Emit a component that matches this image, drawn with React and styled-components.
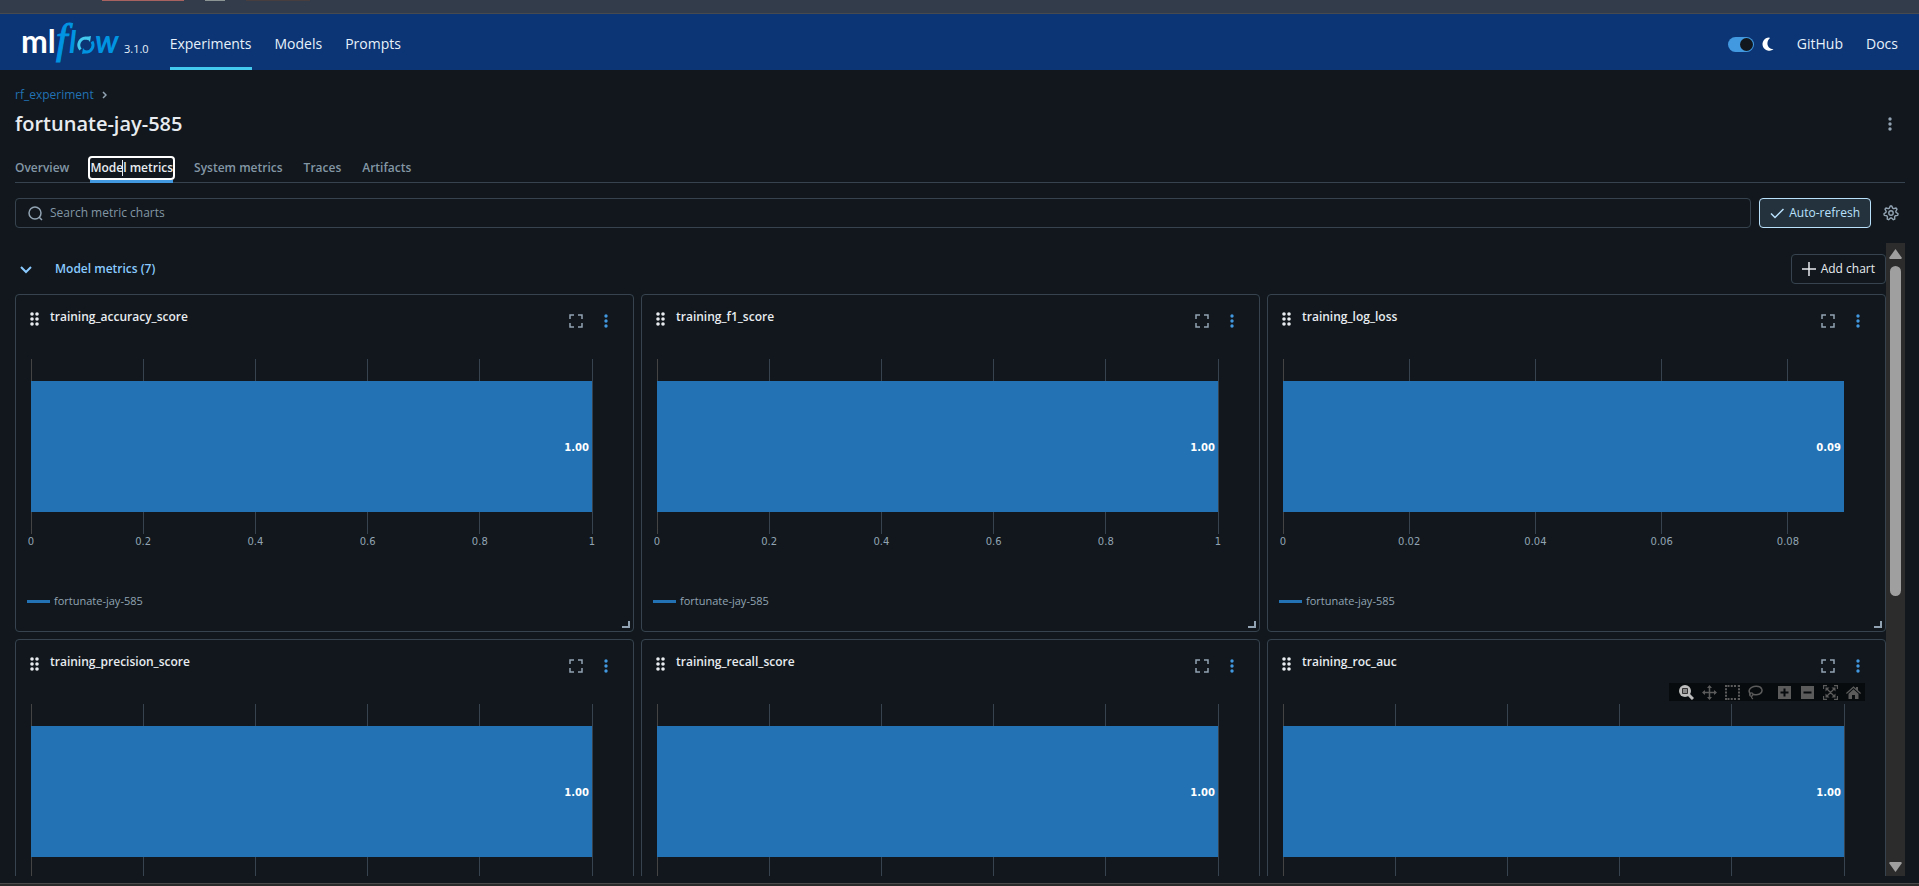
import React from "react";
import styled, { createGlobalStyle } from "styled-components";

const GlobalStyle = createGlobalStyle`
  * { box-sizing: border-box; }
  body {
    margin: 0;
    background: #11171c;
    color: #e8ecf0;
    font-family: "Open Sans", "Noto Sans", sans-serif;
    font-size: 12px;
    line-height: 20px;
  }
  button, input { font: inherit; color: inherit; }
  a { text-decoration: none; color: inherit; }
  h1, h2, h3 { margin: 0; }
`;

const Page = styled.div`
  display: flex;
  flex-direction: column;
  height: 100vh;
`;

const BrowserEdge = styled.div`
  flex: none;
  display: flex;
  align-items: flex-start;
  height: 14px;
  padding-left: 102px;
  background: #323c4b;
  border-bottom: 1px solid #474b50;
`;

const EdgeMark = styled.i`
  width: ${(p) => p.$width}px;
  height: 1px;
  margin-right: 21px;
  background: ${(p) => p.$color};
`;

const Header = styled.header`
  flex: none;
  display: flex;
  align-items: center;
  height: 56px;
  padding: 0 21px;
  background: #0b3574;
`;

const Brand = styled.a`
  display: flex;
  align-items: flex-end;
  gap: 5px;
  margin-right: 21px;
  color: #e7f1fb;
  line-height: 16px;
`;

const Version = styled.span`
  padding-bottom: 5px;
  font-size: 11px;
`;

const Nav = styled.nav`
  display: flex;
  align-self: stretch;
  gap: 23px;
`;

const NavLink = styled.a`
  display: flex;
  align-items: center;
  padding-top: 7px;
  border-bottom: 3px solid ${(p) => (p.$active ? "#43c9ed" : "transparent")};
  color: #e7f1fb;
  font-size: 14px;
`;

const HeaderEnd = styled.div`
  display: flex;
  align-self: stretch;
  align-items: center;
  gap: 23px;
  margin-left: auto;
`;

const ThemeSwitch = styled.label`
  display: flex;
  align-items: center;
  gap: 8px;
  padding-top: 4px;
`;

const SwitchInput = styled.input`
  appearance: none;
  display: flex;
  justify-content: flex-end;
  width: 26px;
  height: 15px;
  margin: 0;
  padding: 1px;
  border-radius: 8px;
  background: #4299e0;
  &::after {
    content: "";
    width: 13px;
    height: 13px;
    border-radius: 50%;
    background: #11171c;
  }
`;

const Main = styled.main`
  flex: 1;
  min-height: 0;
  display: flex;
  flex-direction: column;
  padding: 15px 14px 7px 15px;
`;

const Breadcrumb = styled.nav`
  display: flex;
  align-items: center;
  gap: 8px;
  color: #2272b4;
`;

const TitleRow = styled.div`
  display: flex;
  align-items: center;
  justify-content: space-between;
  height: 38px;
`;

const Title = styled.h1`
  font-size: 20px;
  font-weight: 600;
  line-height: 28px;
`;

const IconButton = styled.button`
  display: grid;
  place-items: center;
  width: 30px;
  height: 30px;
  padding: 0;
  border: 0;
  background: none;
  color: ${(p) => p.$color || "#92a4b3"};
`;

const Tabs = styled.div`
  display: flex;
  gap: 21px;
  margin-top: 14px;
  border-bottom: 1px solid #37444f;
`;

const Tab = styled.button`
  height: 26px;
  margin-bottom: -1px;
  padding: 1px 0 2px;
  border: 0;
  border-bottom: 3px solid ${(p) => (p.$active ? "#4299e0" : "transparent")};
  background: none;
  color: ${(p) => (p.$active ? "#e8ecf0" : "#8396a5")};
  font-weight: 600;
  white-space: nowrap;
`;

const FocusRing = styled.span`
  position: relative;
  display: block;
  border-radius: 2px;
  outline: 2px solid #fff;
  line-height: 20px;
`;

const TextCursor = styled.i`
  position: absolute;
  top: 2px;
  left: 32px;
  width: 1px;
  height: 16px;
  background: #e8ecf0;
`;

const Toolbar = styled.div`
  display: flex;
  gap: 8px;
  margin-top: 15px;
`;

const SearchBox = styled.label`
  flex: 1;
  display: flex;
  align-items: center;
  gap: 7px;
  height: 30px;
  padding: 0 12px;
  border: 1px solid #37444f;
  border-radius: 4px;
  color: #92a4b3;
`;

const SearchInput = styled.input`
  flex: 1;
  padding: 0;
  border: 0;
  outline: 0;
  background: none;
  &::placeholder { color: #8396a5; opacity: 1; }
`;

const Button = styled.button`
  display: flex;
  align-items: center;
  gap: 5px;
  height: 30px;
  padding: 0 10px;
  border: 1px solid ${(p) => (p.$on ? "#bae1fc" : "#37444f")};
  border-radius: 4px;
  background: ${(p) => (p.$on ? "#24323d" : "none")};
  color: ${(p) => (p.$on ? "#bae1fc" : "#e8ecf0")};
  white-space: nowrap;
`;

const Settings = styled.div`
  display: flex;
  margin: 0 -1px 0 -3px;
`;

const ScrollRow = styled.div`
  flex: 1;
  min-height: 0;
  display: flex;
  margin-top: 15px;
`;

const ScrollArea = styled.div`
  flex: 1;
  overflow-y: auto;
  scrollbar-width: none;
`;

const ScrollBar = styled.div`
  display: flex;
  flex-direction: column;
  align-items: center;
  justify-content: space-between;
  width: 19px;
  padding: 6px 0 4px;
  background: #2c2c2c;
`;

const ScrollTrack = styled.div`
  flex: 1;
  margin: 7px 0;
`;

const ScrollThumb = styled.div`
  width: 11px;
  height: 56%;
  border-radius: 6px;
  background: #9f9f9f;
`;

const SectionHeader = styled.div`
  display: flex;
  align-items: center;
  padding: 11px 0 10px 1px;
`;

const SectionTitle = styled.h2`
  margin: 0 auto 0 19px;
  color: #8acaff;
  font-size: 12px;
  font-weight: 600;
`;

const Toggle = styled.button`
  display: flex;
  padding: 4px;
  border: 0;
  background: none;
  color: #8acaff;
`;

const Grid = styled.div`
  display: grid;
  grid-template-columns: repeat(3, 1fr);
  gap: 7px;
`;

const Card = styled.section`
  position: relative;
  height: 338px;
  border: 1px solid #37444f;
  border-radius: 4px;
`;

const CardHeader = styled.div`
  display: flex;
  align-items: flex-start;
  height: 64px;
  padding: 12px 12px 0 14px;
`;

const CardTitle = styled.h3`
  margin: 0 auto 0 11px;
  font-size: 12px;
  font-weight: 600;
`;

const CardActions = styled.div`
  display: flex;
  margin-top: -1px;
`;

const DragHandle = styled.span`
  padding-top: 5px;
  line-height: 0;
`;

const Plot = styled.svg`
  display: block;
  width: calc(100% - 56px);
  height: 192px;
  margin-left: 15px;
  overflow: visible;
  font-family: "DejaVu Sans", Verdana, sans-serif;
  font-size: 10px;
`;

const Legend = styled.div`
  display: flex;
  align-items: center;
  gap: 4px;
  margin: 40px 0 0 11px;
  color: #92a4b3;
  font-size: 11px;
`;

const LegendLine = styled.i`
  width: 23px;
  height: 3px;
  background: #2272b4;
`;

const ResizeCorner = styled.i`
  position: absolute;
  right: 3px;
  bottom: 3px;
  width: 8px;
  height: 7px;
  border: solid #92a4b3;
  border-width: 0 2px 2px 0;
`;

const ModeBar = styled.div`
  position: absolute;
  top: 43px;
  right: 20px;
  display: flex;
  align-items: center;
  height: 18px;
  padding-left: 6px;
  background: #070b0e;
`;

const ModeButton = styled.button`
  display: flex;
  margin-left: ${(p) => (p.$group ? 6 : 0)}px;
  padding: 0 4px;
  border: 0;
  background: none;
  color: ${(p) => (p.$active ? "#bdbdbd" : "#5b5b5b")};
`;

const LogoDrawing = styled.svg`
  overflow: visible;
`;

const Logo = () => (
  <LogoDrawing width="98" height="40" viewBox="0 0 98 40" role="img" aria-label="mlflow">
    <g fontFamily="Lato, sans-serif" fontWeight="700">
      <text x="0" y="31" fontSize="32" fill="#fff">ml</text>
      <g fontStyle="italic" fill="#0194e2">
        <text x="35" y="31" fontFamily="Liberation Serif, serif" fontWeight="400" fontSize="42" stroke="#0194e2" strokeWidth="1">f</text>
        <text x="48" y="31" fontSize="30">l</text>
        <text x="74" y="31" fontSize="32">w</text>
      </g>
    </g>
    <g fill="none" strokeWidth="3">
      <path d="M59.500 27.500a7 7 0 0 1 5-11.500q2 0 3.500 1" stroke="#43c9ed" />
      <path d="m65 15 5-1-1 6z" fill="#43c9ed" />
      <path d="M71 19.500a7 7 0 0 1-5 10.500q-2 0-3.500-1" stroke="#0194e2" />
      <path d="m66 31-5 1 1-6z" fill="#0194e2" />
    </g>
  </LogoDrawing>
);

const Kebab = () => (
  <svg width="4" height="14" viewBox="0 0 4 14" fill="currentColor" aria-hidden="true">
    <circle cx="2" cy="2" r="1.700" /><circle cx="2" cy="7" r="1.700" /><circle cx="2" cy="12" r="1.700" />
  </svg>
);

const Grip = () => (
  <svg width="9" height="14" viewBox="0 0 9 14" fill="#e8ecf0" aria-hidden="true">
    {[2, 7, 12].map((y) => (
      <g key={y}><circle cx="2" cy={y} r="1.800" /><circle cx="7" cy={y} r="1.800" /></g>
    ))}
  </svg>
);

const Stroke = ({ size = 14, d, width = 1.5, ...rest }) => (
  <svg width={size} height={size} viewBox={`0 0 ${size} ${size}`} fill="none" stroke="currentColor" strokeWidth={width} aria-hidden="true" {...rest}>
    <path d={d} />
  </svg>
);

const gearPoints = Array.from({ length: 28 }, (_, i) => {
  const angle = ((i - 0.5) / 28) * 2 * Math.PI - Math.PI / 2;
  const radius = i % 4 < 2 ? 7.1 : 5.1;
  return `${(8 + radius * Math.cos(angle)).toFixed(2)},${(8 + radius * Math.sin(angle)).toFixed(2)}`;
}).join(" ");

const Gear = () => (
  <svg width="16" height="16" viewBox="0 0 16 16" fill="none" stroke="currentColor" strokeWidth="1.400" strokeLinejoin="round" aria-hidden="true">
    <polygon points={gearPoints} />
    <circle cx="8" cy="8" r="2.200" />
  </svg>
);

const solid = (children) => (
  <svg width="15" height="15" viewBox="0 0 15 15" fill="currentColor" stroke="currentColor" strokeWidth="0" aria-hidden="true">{children}</svg>
);

const modes = [
  { name: "Zoom", active: true, icon: solid(<><path d="m9.500 9.500 4.500 4.500" strokeWidth="3" /><circle cx="6" cy="6" r="6" /><path d="M3.500 3.500h5v5h-5z" fill="#888" stroke="#333" strokeWidth="1" /></>) },
  { name: "Pan", icon: solid(<><path d="M7.500 1v13M1 7.500h13" strokeWidth="1.500" /><path d="M7.500 0 10 3H5zM7.500 15 5 12h5zM0 7.500 3 5v5zM15 7.500 12 10V5z" /></>) },
  { name: "Box Select", icon: solid(<path d="M1 0v15M14 0v15M2.500 1h10M2.500 14h10" fill="none" strokeWidth="2" strokeDasharray="2 1.250" />) },
  { name: "Lasso Select", icon: solid(<><path d="M3 9.500C-1 6 2 1.500 8 1.200s8 5.300 3.500 7.800c-3 1.500-5 .5-7 .3" fill="none" strokeWidth="1.500" /><circle cx="3.300" cy="9.500" r="1.700" fill="none" strokeWidth="1.200" /><path d="M3.500 11q-.5 2 1.500 3" fill="none" strokeWidth="1.200" /></>) },
  { name: "Zoom in", group: true, icon: solid(<><path d="M1 1h13v13H1z" /><path d="M7.500 3.500v8M3.500 7.500h8" stroke="#070b0e" strokeWidth="2" /></>) },
  { name: "Zoom out", icon: solid(<><path d="M1 1h13v13H1z" /><path d="M3.500 7.500h8" stroke="#070b0e" strokeWidth="2" /></>) },
  { name: "Autoscale", icon: solid(<><path d="M.5 4V.5H4M11 .5h3.500V4M14.500 11v3.500H11M4 14.500H.5V11M4 4l7 7M11 4l-7 7" fill="none" strokeWidth="1.300" /><path d="M2.500 2.500h4l-4 4zM12.500 2.500v4l-4-4zM12.500 12.500h-4l4-4zM2.500 12.500v-4l4 4z" /></>) },
  { name: "Reset axes", icon: solid(<><path d="M0 8 7.500 1.200 10 3.500V2h2v3.300L15 8l-.8 1L7.500 3 .8 9z" /><path d="m7.500 4.200 5 4.500V14H9v-4H6v4H2.500V8.700z" /></>) },
];

const unit = [[0, "0"], [20, "0.2"], [40, "0.4"], [60, "0.6"], [80, "0.8"], [100, "1"]];
const loss = [[0, "0"], [22.5, "0.02"], [45, "0.04"], [67.5, "0.06"], [90, "0.08"]];

const charts = [
  { title: "training_accuracy_score", value: "1.00", ticks: unit },
  { title: "training_f1_score", value: "1.00", ticks: unit },
  { title: "training_log_loss", value: "0.09", ticks: loss },
  { title: "training_precision_score", value: "1.00", ticks: unit },
  { title: "training_recall_score", value: "1.00", ticks: unit },
  { title: "training_roc_auc", value: "1.00", ticks: unit, hovered: true },
];

const ChartCard = ({ title, value, ticks, hovered }) => (
  <Card>
    <CardHeader>
      <DragHandle><Grip /></DragHandle>
      <CardTitle>{title}</CardTitle>
      <CardActions>
        <IconButton aria-label="Full screen">
          <Stroke d="M1 5V1h4M9 1h4v4M13 9v4H9M5 13H1V9" />
        </IconButton>
        <IconButton aria-label="Chart options" $color="#4299e0"><Kebab /></IconButton>
      </CardActions>
    </CardHeader>
    <Plot role="img" aria-label={`${title}: ${value}`}>
      {ticks.map(([at, label]) => (
        <g key={label}>
          <line x1={`${at}%`} x2={`${at}%`} y1="0" y2="175" stroke={at ? "#37444f" : "#444444"} shapeRendering="crispEdges" />
          <text x={`${at}%`} y="186" textAnchor="middle" fill="#92a4b3">{label}</text>
        </g>
      ))}
      <rect x="0" y="22" width="100%" height="131" fill="#2272b4" />
      <text x="100%" dx="-3" y="92" textAnchor="end" fill="#fff" fontWeight="700">{value}</text>
    </Plot>
    <Legend><LegendLine />fortunate-jay-585</Legend>
    <ResizeCorner />
    {hovered && (
      <ModeBar>
        {modes.map((m) => (
          <ModeButton key={m.name} aria-label={m.name} $active={m.active} $group={m.group}>{m.icon}</ModeButton>
        ))}
      </ModeBar>
    )}
  </Card>
);

const WindowEdge = styled.footer`
  flex: none;
  height: 3px;
  border-top: 1px solid #4b4b4b;
  background: #2a2a2a;
`;

export default function App() {
  return (
    <Page>
      <GlobalStyle />
      <BrowserEdge>
        <EdgeMark $width={82} $color="#a8625f" />
        <EdgeMark $width={20} $color="#8d9494" />
        <EdgeMark $width={64} $color="#473f3f" />
      </BrowserEdge>
      <Header>
        <Brand href="#"><Logo /><Version>3.1.0</Version></Brand>
        <Nav>
          <NavLink href="#" $active>Experiments</NavLink>
          <NavLink href="#">Models</NavLink>
          <NavLink href="#">Prompts</NavLink>
        </Nav>
        <HeaderEnd>
          <ThemeSwitch>
            <SwitchInput type="checkbox" role="switch" defaultChecked aria-label="Dark theme" />
            <svg width="12" height="14" viewBox="0 0 12 14" fill="#fff" aria-hidden="true">
              <path d="M7 .5A6.600 6.600 0 1 0 11.500 12C5 12 3.500 5 8 1Z" />
            </svg>
          </ThemeSwitch>
          <Nav>
            <NavLink href="#">GitHub</NavLink>
            <NavLink href="#">Docs</NavLink>
          </Nav>
        </HeaderEnd>
      </Header>
      <Main>
        <Breadcrumb>
          <a href="#">rf_experiment</a>
          <svg width="5" height="8" viewBox="0 0 5 8" fill="none" stroke="#92a4b3" strokeWidth="1.500" aria-hidden="true"><path d="m1 1 3 3-3 3" /></svg>
        </Breadcrumb>
        <TitleRow>
          <Title>fortunate-jay-585</Title>
          <IconButton aria-label="More"><Kebab /></IconButton>
        </TitleRow>
        <Tabs role="tablist">
          <Tab role="tab">Overview</Tab>
          <Tab role="tab" aria-selected="true" $active><FocusRing>Model metrics<TextCursor /></FocusRing></Tab>
          <Tab role="tab">System metrics</Tab>
          <Tab role="tab">Traces</Tab>
          <Tab role="tab">Artifacts</Tab>
        </Tabs>
        <Toolbar>
          <SearchBox>
            <svg width="15" height="15" viewBox="0 0 15 15" fill="none" stroke="currentColor" strokeWidth="1.500" aria-hidden="true"><circle cx="7" cy="7" r="6" /><path d="m11 11 3 3" /></svg>
            <SearchInput aria-label="Search metric charts" placeholder="Search metric charts" />
          </SearchBox>
          <Button $on aria-pressed="true"><Stroke d="m1 7.500 4 4 8.500-8.500" />Auto-refresh</Button>
          <Settings><IconButton aria-label="Configure charts"><Gear /></IconButton></Settings>
        </Toolbar>
        <ScrollRow>
          <ScrollArea>
            <SectionHeader>
              <Toggle aria-label="Collapse section"><Stroke size={12} width={2} d="m1 4 5 5 5-5" /></Toggle>
              <SectionTitle>Model metrics (7)</SectionTitle>
              <Button><Stroke d="M7 0v14M0 7h14" />Add chart</Button>
            </SectionHeader>
            <Grid>{charts.map((c) => <ChartCard key={c.title} {...c} />)}</Grid>
          </ScrollArea>
          <ScrollBar aria-hidden="true">
            <svg width="13" height="10" viewBox="0 0 13 10" fill="#9f9f9f"><path d="M6.500 0 13 9l-1 1H1L0 9Z" /></svg>
            <ScrollTrack><ScrollThumb /></ScrollTrack>
            <svg width="13" height="10" viewBox="0 0 13 10" fill="#9f9f9f"><path d="M6.500 10 0 1l1-1h11l1 1Z" /></svg>
          </ScrollBar>
        </ScrollRow>
      </Main>
      <WindowEdge />
    </Page>
  );
}
